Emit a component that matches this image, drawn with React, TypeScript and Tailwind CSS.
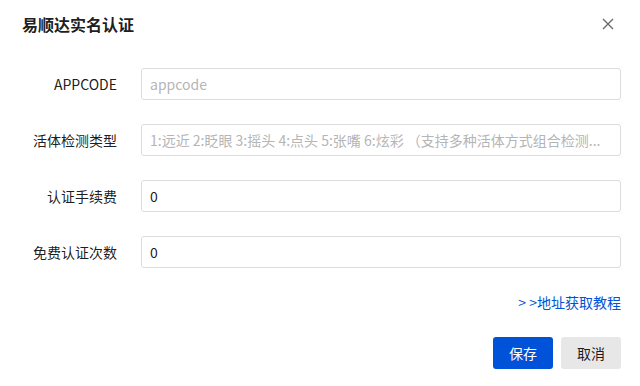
import React from "react";

const font = { fontFamily: '"Noto Sans CJK SC", "Noto Sans", sans-serif' };

function Row({ label, placeholder, value }: { label: string; placeholder?: string; value?: string }) {
  return (
    <div className="flex items-center h-8">
      <div className="w-[97px] shrink-0 text-right text-[14px] text-[rgba(0,0,0,0.9)] leading-[22px]">{label}</div>
      <div className="ml-6 flex-1 h-8 border border-[#dcdcdc] rounded-[3px] flex items-center px-2 min-w-0">
        {value !== undefined ? (
          <span className="text-[14px] text-[rgba(0,0,0,0.9)] leading-[22px]">{value}</span>
        ) : (
          <span className="text-[14px] text-[#b5b5b5] leading-[22px] whitespace-nowrap">{placeholder}</span>
        )}
      </div>
    </div>
  );
}

export default function App() {
  return (
    <div className="w-[640px] h-[386px] bg-white pl-5 pr-[19px]" style={font}>
      <div className="flex items-center justify-between pt-[12px] h-[35px]">
        <div className="text-[16px] font-bold text-[rgba(0,0,0,0.9)] leading-[22px] pl-[2px]">易顺达实名认证</div>
        <svg width="12" height="12" viewBox="0 0 12 12" className="mr-[7px]">
          <path d="M1 1 L11 11 M11 1 L1 11" stroke="#6b6b6b" strokeWidth="1.4" fill="none" />
        </svg>
      </div>
      <div className="mt-[33px] flex flex-col gap-6">
        <Row label="APPCODE" placeholder="appcode" />
        <Row label="活体检测类型" placeholder="1:远近 2:眨眼 3:摇头 4:点头 5:张嘴 6:炫彩 （支持多种活体方式组合检测..." />
        <Row label="认证手续费" value="0" />
        <Row label="免费认证次数" value="0" />
      </div>
      <div className="mt-[23px] flex justify-end">
        <span className="text-[14px] leading-[22px] text-[#0052d9]">&gt; &gt;地址获取教程</span>
      </div>
      <div className="mt-[24px] flex justify-end gap-2">
        <button className="w-[60px] h-8 rounded-[3px] bg-[#0052d9] text-white text-[14px]">保存</button>
        <button className="w-[60px] h-8 rounded-[3px] bg-[#e7e7e7] text-[rgba(0,0,0,0.9)] text-[14px]">取消</button>
      </div>
    </div>
  );
}
